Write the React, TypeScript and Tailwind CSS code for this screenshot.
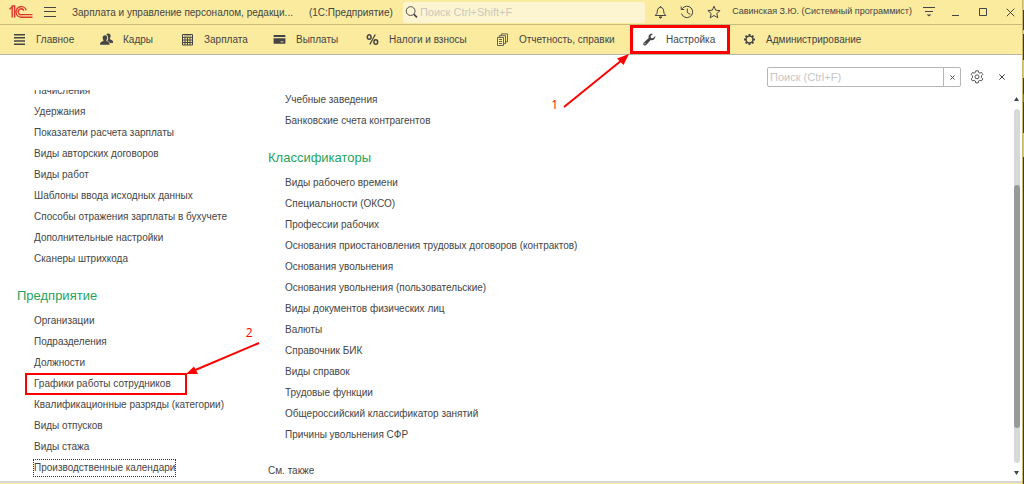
import React from "react";

const generalLinks = [
  "Начисления",
  "Удержания",
  "Показатели расчета зарплаты",
  "Виды авторских договоров",
  "Виды работ",
  "Шаблоны ввода исходных данных",
  "Способы отражения зарплаты в бухучете",
  "Дополнительные настройки",
  "Сканеры штрихкода",
];

const companyLinks = [
  "Организации",
  "Подразделения",
  "Должности",
  "Графики работы сотрудников",
  "Квалификационные разряды (категории)",
  "Виды отпусков",
  "Виды стажа",
  "Производственные календари",
];

const partnerLinks = ["Учебные заведения", "Банковские счета контрагентов"];

const classifierLinks = [
  "Виды рабочего времени",
  "Специальности (ОКСО)",
  "Профессии рабочих",
  "Основания приостановления трудовых договоров (контрактов)",
  "Основания увольнения",
  "Основания увольнения (пользовательские)",
  "Виды документов физических лиц",
  "Валюты",
  "Справочник БИК",
  "Виды справок",
  "Трудовые функции",
  "Общероссийский классификатор занятий",
  "Причины увольнения СФР",
];

function Logo() {
  return (
    <svg width="24" height="14" viewBox="0 0 24 14" fill="none" stroke="#e0352b" strokeWidth="1.4" aria-hidden="true">
      <path d="M0.5 4.2 L3.2 1.8 V12.5 M2.6 1 H5.6 V12.5" />
      <path d="M17.3 5.2 A5.3 5.3 0 1 0 12.6 12.2 H23.5" />
      <path d="M14.8 5.8 A2.9 2.9 0 1 0 12.6 9.6 H23.5" />
    </svg>
  );
}

type IconName = "main" | "people" | "calc" | "card" | "percent" | "docs" | "wrench" | "cog";

function NavIcon({ name }: { name: IconName }) {
  const common = { width: 13, height: 13, viewBox: "0 0 13 13", fill: "#454545", className: "shrink-0", "aria-hidden": true } as const;
  switch (name) {
    case "main":
      return (
        <svg {...common}>
          <path d="M1 1h11v1.4H1zM1 4.1h11v1.4H1zM1 7.3h11v1.4H1zM1 10.5h11v1.4H1z" />
        </svg>
      );
    case "people":
      return (
        <svg {...common}>
          <path d="M8.4 0.6c1.6 0 2.3 1.1 2.2 2.6-.1 1-.5 1.9-.8 2.3v.8c1 .5 2.6.9 3.1 1.9.3.7.1 1.2.1 1.8H10C9.5 8.800 8.300 8.300 7.300 7.900c.6-.7.9-1.800.9-2.900 0-1.700-.7-2.800-1.900-3.200.4-.8 1.200-1.200 2.100-1.200z" />
          <path d="M5 2.300c1.600 0 2.300 1.100 2.200 2.600-.1 1-.4 1.700-.8 2.200v.8c1 .5 2.400.8 2.900 1.800.3.700.3 1.300.3 2H.1c0-.7-.1-1.400.3-2 .5-1 2-1.300 3-1.800v-.8C3 6.600 2.700 5.900 2.700 4.900 2.600 3.400 3.400 2.300 5 2.300z" />
        </svg>
      );
    case "calc":
      return (
        <svg {...common} fill="none" stroke="#454545">
          <path d="M1.500 1.500h10v10.500h-10z M1.500 4.300h10 M4 4.500v7.500 M6.500 4.500v7.500 M9 4.500v7.500 M1.500 7h10 M1.500 9.500h10" />
          <path d="M3 2.900h7" stroke="#8d8768" />
        </svg>
      );
    case "card":
      return (
        <svg {...common}>
          <path d="M1.200 2h10.600q.6 0 .6.600V4H.600V2.600q0-.6.600-.6zM.6 5.300h11.800v4.900q0 .6-.6.600H1.200q-.6 0-.6-.6z" />
          <path d="M7.500 8.300h3v1h-3z" fill="#d8cb8c" />
        </svg>
      );
    case "percent":
      return (
        <svg {...common} fill="none" stroke="#454545" strokeWidth="1.500">
          <ellipse cx="3.200" cy="4" rx="1.900" ry="2.300" />
          <ellipse cx="9.800" cy="9" rx="1.900" ry="2.300" />
          <path d="M9.300 1.500 3.800 11.500" strokeWidth="1.300" />
        </svg>
      );
    case "docs":
      return (
        <svg {...common} fill="none" stroke="#555" strokeWidth="0.9">
          <path d="M1.500 4.500h6v8h-6z M3.300 4.500V2.700h6.200v8H7.500 M5.300 2.700V.9h6.200v8H9.500 M3 6.500h3 M3 8.500h3 M3 10.500h3" />
        </svg>
      );
    case "wrench":
      return (
        <svg {...common}>
          <path d="M12.300 3.100 10 5.200 8 4.900 7.600 3 9.900.9C8.300.3 6.700.8 5.900 2.200c-.5.900-.5 1.800-.2 2.700L.8 9.500c-.8.800-.8 1.800-.1 2.500.7.700 1.800.7 2.500-.1l4.500-4.900c1.100.4 2.300.2 3.300-.6 1-.9 1.500-2.100 1.300-3.300z" />
          <circle cx="2" cy="10.700" r=".6" fill="#fff" />
        </svg>
      );
    case "cog":
      return (
        <svg {...common} fill="none" stroke="#454545">
          <circle cx="6.500" cy="6.500" r="3.400" strokeWidth="1.400" />
          <path d="M6.500 3V1M6.500 10v2M3 6.500H1M10 6.500h2M4 4 2.600 2.600M9 9l1.400 1.400M4 9l-1.400 1.400M9 4l1.400-1.400" strokeWidth="2" />
        </svg>
      );
  }
}

const navItems: { label: string; icon: IconName; active?: boolean }[] = [
  { label: "Главное", icon: "main" },
  { label: "Кадры", icon: "people" },
  { label: "Зарплата", icon: "calc" },
  { label: "Выплаты", icon: "card" },
  { label: "Налоги и взносы", icon: "percent" },
  { label: "Отчетность, справки", icon: "docs" },
  { label: "Настройка", icon: "wrench", active: true },
  { label: "Администрирование", icon: "cog" },
];

function TitleBar() {
  return (
    <header className="flex h-[25px] items-center border-b border-[#c9bb7c] pl-[9px] pr-[7px]">
      <Logo />
      <button aria-label="Меню" className="ml-[11px] flex">
        <svg width="12" height="12" viewBox="0 0 12 12" stroke="#454545" aria-hidden="true">
          <path d="M0 1.500h12M0 5.500h12M0 10.500h12" />
        </svg>
      </button>
      <h1 className="ml-4 flex gap-4 whitespace-nowrap">
        <span>Зарплата и управление персоналом, редакци...</span>
        <span>(1С:Предприятие)</span>
      </h1>
      <label className="ml-[10px] flex h-[21px] grow items-center rounded-[3px] bg-[#fdf5d2] pl-[2px]">
        <svg width="14" height="14" viewBox="0 0 14 14" fill="none" stroke="#454545" aria-hidden="true">
          <circle cx="6" cy="6" r="4.700" />
          <path d="M9.300 9.300 12.800 12.800" strokeWidth="1.800" />
        </svg>
        <input aria-label="Глобальный поиск" placeholder="Поиск Ctrl+Shift+F" className="ml-[2px] w-full min-w-0 bg-transparent text-[11px] outline-none placeholder:text-[#cbc8bd]" />
      </label>
      <div className="ml-[9px] flex items-center gap-[13px]">
        <button aria-label="Уведомления">
          <svg width="13" height="14" viewBox="0 0 13 14" fill="none" stroke="#454545" aria-hidden="true">
            <path d="M6.500 1v1.200M1.200 10.500h10.600L10 8.300C9.600 5 9.400 2.500 6.500 2.300 3.600 2.500 3.400 5 3 8.300z" />
            <path d="M5 12h3l-1.500 1.200z" fill="#454545" />
          </svg>
        </button>
        <button aria-label="История">
          <svg width="14" height="14" viewBox="0 0 14 14" fill="none" stroke="#454545" aria-hidden="true">
            <path d="M2.200 3.800A5.700 5.700 0 1 1 1.500 8.500M1.200 1.500v3h3M7.300 3.500v4l3 2" />
          </svg>
        </button>
        <button aria-label="Избранное">
          <svg width="14" height="14" viewBox="0 0 14 14" fill="none" stroke="#454545" aria-hidden="true">
            <path d="M7 1.200 8.700 5.200l4.400.4-3.300 2.900 1 4.300L7 10.500l-3.800 2.300 1-4.300L.9 5.600l4.400-.4z" />
          </svg>
        </button>
      </div>
      <span className="ml-[11px] whitespace-nowrap text-[9px]">Савинская З.Ю. (Системный программист)</span>
      <button aria-label="Сервис" className="ml-[11px]">
        <svg width="12" height="12" viewBox="0 0 12 12" stroke="#454545" fill="#454545" aria-hidden="true">
          <path d="M0 1.500h12M2 5.500h8" />
          <path d="M3.500 8.500h5L6 10.500z" stroke="none" />
        </svg>
      </button>
      <div className="ml-[17px] flex items-center gap-[19px]">
        <button aria-label="Свернуть">
          <svg width="8" height="10" viewBox="0 0 8 10" stroke="#454545" aria-hidden="true">
            <path d="M0 8.500h7" />
          </svg>
        </button>
        <button aria-label="Развернуть">
          <svg width="8" height="8" viewBox="0 0 8 8" fill="none" stroke="#454545" aria-hidden="true">
            <path d="M.5.5h7v7h-7z" />
          </svg>
        </button>
        <button aria-label="Закрыть приложение">
          <svg width="9" height="9" viewBox="0 0 9 9" stroke="#454545" aria-hidden="true">
            <path d="M.7.700 8.300 8.300M8.300.7.700 8.300" />
          </svg>
        </button>
      </div>
    </header>
  );
}

function NavBar() {
  return (
    <nav className="grid h-[30px] grid-cols-[87px_81px_92px_93px_130px_147px_100px_1fr] border-b border-[#b9b5a6]">
      {navItems.map((item) => (
        <div key={item.label} className="relative">
          <button
            className={
              item.active
                ? "flex h-full w-full items-center gap-[10px] bg-white pl-[13px] whitespace-nowrap outline-3 -outline-offset-3 outline-[#ff0000]"
                : "flex h-full items-center gap-[10px] pl-[13px] whitespace-nowrap"
            }
          >
            <NavIcon name={item.icon} />
            {item.label}
          </button>
          {item.active && (
            <div className="pointer-events-none absolute top-full right-full z-10 flex items-end text-[#ff0000]">
              <span className="font-['Open_Sans',sans-serif] text-[12px] leading-[14px]">1</span>
              <svg width="72" height="58" viewBox="2 0 72 58" aria-hidden="true">
                <path d="M8 53 66 6" stroke="currentColor" strokeWidth="2" />
                <path d="M73 0 61 4.500 67.500 11z" fill="currentColor" />
              </svg>
            </div>
          )}
        </div>
      ))}
    </nav>
  );
}

function LinkList({ items, marked, focused }: { items: string[]; marked?: string; focused?: string }) {
  return (
    <ul className="pl-[17px]">
      {items.map((item) => (
        <li key={item} className="flex h-[21px] items-center">
          {item === marked ? (
            <span className="relative -ml-[9px] flex border-2 border-[#ff0000] py-px pr-[14px] pl-[7px]">
              <a href="#" className="whitespace-nowrap leading-4">{item}</a>
              <span className="pointer-events-none absolute bottom-full left-full flex text-[#ff0000]">
                <svg width="75" height="34" viewBox="0 0 75 34" aria-hidden="true">
                  <path d="M8 30 74 2" stroke="currentColor" strokeWidth="2" />
                  <path d="M1 33 9 25.500 13 33z" fill="currentColor" />
                </svg>
                <span className="absolute bottom-full left-[61px] font-['Open_Sans',sans-serif] text-[12px] leading-4">2</span>
              </span>
            </span>
          ) : (
            <a
              href="#"
              className={
                item === focused
                  ? "whitespace-nowrap leading-4 outline-1 outline-dotted outline-[#333]"
                  : "whitespace-nowrap leading-4"
              }
            >
              {item}
            </a>
          )}
        </li>
      ))}
    </ul>
  );
}

function SectionTitle({ children }: { children: React.ReactNode }) {
  return <h2 className="mt-[13px] flex h-7 items-center text-[13px] text-[#1fa35c]">{children}</h2>;
}

function ScrollBar() {
  return (
    <div className="flex w-[7px] shrink-0 flex-col items-center pt-[7px] pb-[6px]" aria-hidden="true">
      <svg width="5" height="4" viewBox="0 0 5 4" fill="#454545">
        <path d="M2.500 0 5 4H0z" />
      </svg>
      <div className="mt-2 flex w-[6px] grow flex-col rounded-full bg-[#d8d8d8]">
        <div className="grow-[76]" />
        <div className="grow-[245] rounded-full bg-[#999]" />
        <div className="grow-[35]" />
      </div>
      <svg width="5" height="4" viewBox="0 0 5 4" fill="#454545" className="mt-2">
        <path d="M0 0h5L2.500 4z" />
      </svg>
    </div>
  );
}

function DesktopEdge() {
  return (
    <div className="flex w-px shrink-0 flex-col" aria-hidden="true">
      <div className="h-[10px] bg-[#e6d453]" />
      <div className="h-[10px] bg-[#6b2a20]" />
      <div className="h-[10px]" />
      <div className="h-1 bg-[#a8d8b0]" />
      <div className="h-[26px]" />
      <div className="h-[18px] bg-[#e3c94f]" />
      <div className="h-4" />
      <div className="h-2 bg-[#a8642c]" />
      <div className="h-[31px]" />
      <div className="h-6 bg-[#e3c94f]" />
    </div>
  );
}

export default function App() {
  return (
    <div className="flex min-h-screen bg-[#1f3f4b] font-['Liberation_Sans',Arial,sans-serif] text-[10px] text-[#454545]">
      <div className="flex min-w-0 grow flex-col border-r border-[#c9b96a] bg-[#faeb9e]">
        <TitleBar />
        <NavBar />
        <main className="mb-px flex grow flex-col border-b-2 border-[#d6d6d6] bg-white pr-[2px]">
          <div className="flex h-[35px] items-end justify-end pr-[15px] pb-[3px]">
            <div className="flex h-5 w-[194px] rounded-[2px] border border-[#b5b5b5]">
              <input aria-label="Поиск" placeholder="Поиск (Ctrl+F)" className="min-w-0 grow pl-[2px] text-[11px] outline-none placeholder:text-[#c6c6c6]" />
              <button aria-label="Очистить" className="flex w-[17px] items-center justify-center border-l border-[#b5b5b5]">
                <svg width="5" height="5" viewBox="0 0 5 5" stroke="#454545" aria-hidden="true">
                  <path d="M.5.500 4.500 4.500M4.500.5.500 4.500" />
                </svg>
              </button>
            </div>
            <button aria-label="Параметры" className="ml-[9px] flex h-5 items-center">
              <svg width="14" height="14" viewBox="0 0 14 14" fill="none" stroke="#555" aria-hidden="true">
                <path d="M5.800.8h2.400l.4 1.700 1.200.6 1.700-.6 1.300 2-1.300 1.300v1.800l1.300 1.300-1.300 2-1.700-.5-1.200.6-.4 1.900H5.800L5.400 11l-1.200-.6-1.700.5-1.300-2 1.300-1.300V5.800L1.200 4.500l1.300-2 1.700.6 1.200-.6z" />
                <circle cx="7" cy="6.800" r="2" />
              </svg>
            </button>
            <button aria-label="Закрыть" className="ml-[15px] flex h-5 items-center">
              <svg width="6" height="6" viewBox="0 0 6 6" stroke="#454545" aria-hidden="true">
                <path d="M.3.300 5.700 5.700M5.700.3.300 5.700" />
              </svg>
            </button>
          </div>
          <div className="flex grow">
            <div className="grid grow grid-cols-[251px_1fr] overflow-hidden pl-[17px]">
              <section className="-mt-[10px]">
                <LinkList items={generalLinks} />
                <SectionTitle>Предприятие</SectionTitle>
                <LinkList items={companyLinks} marked="Графики работы сотрудников" focused="Производственные календари" />
              </section>
              <section className="-mt-px">
                <LinkList items={partnerLinks} />
                <SectionTitle>Классификаторы</SectionTitle>
                <LinkList items={classifierLinks} />
                <h3 className="mt-[15px] flex h-[21px] items-center">См. также</h3>
              </section>
            </div>
            <ScrollBar />
          </div>
        </main>
      </div>
      <DesktopEdge />
    </div>
  );
}
